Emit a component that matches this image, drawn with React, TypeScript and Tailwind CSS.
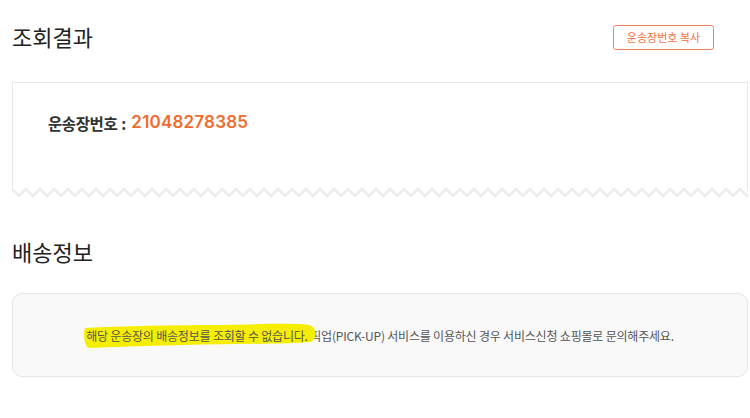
import React from 'react';

const kr = '"Noto Sans CJK KR", "Noto Sans", sans-serif';

const Zigzag: React.FC = () => {
    const width = 736;
    const period = 14;
    const pts: string[] = [];
    for ( let x = 0; x <= width + period; x += period ) {
        pts.push( `${ x },2` );
        pts.push( `${ x + period / 2 },9` );
    }
    return (
        <svg width={ width } height={ 12 } className="block" viewBox={ `0 0 ${ width } 12` }>
            <polyline
                points={ pts.join( ' ' ) }
                fill="none"
                stroke="#ececec"
                strokeWidth="2.5"
            />
        </svg>
    );
};

const Highlight: React.FC = () => (
    <svg
        className="absolute left-[-3px] top-[-5px]"
        width="236"
        height="27"
        viewBox="0 0 236 27"
    >
        <path
            d="M2 6 C40 4 90 3 140 3 C180 2 210 1 226 3 C234 5 235 16 228 20 C200 22 150 22 100 23 C60 24 25 25 6 26 C1 25 0 10 2 6 Z"
            fill="#f6ee00"
        />
    </svg>
);

export default function App() {
    return (
        <div className="w-[750px] h-[418px] bg-white pl-[12px] pr-[2px]" style={ { fontFamily: kr } }>
            <div className="flex justify-between pt-[22px] pr-[34px] h-[82px] items-start">
                <h2 className="text-[22px] leading-[28px] text-[#222] font-normal">조회결과</h2>
                <button className="mt-[3px] h-[25px] w-[101px] rounded-[3px] border-[1.5px] border-[#f5845a] text-[11px] text-[#f0743c] bg-white">
                    운송장번호 복사
                </button>
            </div>

            <div>
                <div className="border-x border-t border-[#e8e8e8] h-[108px] pl-[35px] pt-[28px]">
                    <div className="flex items-center">
                        <span className="text-[15.5px] font-bold text-[#333] tracking-[-0.4px]">운송장번호</span>
                        <span className="text-[15.5px] font-bold text-[#333] ml-[4px]">:</span>
                        <span
                            className="ml-[5px] -mt-[1px] text-[17px] font-semibold text-[#f26a2c] tracking-[0.2px]"
                            style={ { fontFamily: 'Inter, "Open Sans", sans-serif' } }
                        >
                            21048278385
                        </span>
                    </div>
                </div>
                <div className="-mt-[3px]">
                    <Zigzag />
                </div>
            </div>

            <h2 className="mt-[38px] text-[22px] leading-[28px] text-[#222] font-normal">배송정보</h2>

            <div className="mt-[28px] h-[84px] rounded-[10px] border border-[#e5e5e5] bg-[#f9f9f9] flex items-center justify-center">
                <p className="text-[12px] text-[#555] tracking-[-0.2px] mt-[1px]">
                    <span className="relative inline-block">
                        <Highlight />
                        <span className="relative">해당 운송장의 배송정보를 조회할 수 없습니다.</span>
                    </span>{ ' ' }
                    픽업(PICK-UP) 서비스를 이용하신 경우 서비스신청 쇼핑몰로 문의해주세요.
                </p>
            </div>
        </div>
    );
}
